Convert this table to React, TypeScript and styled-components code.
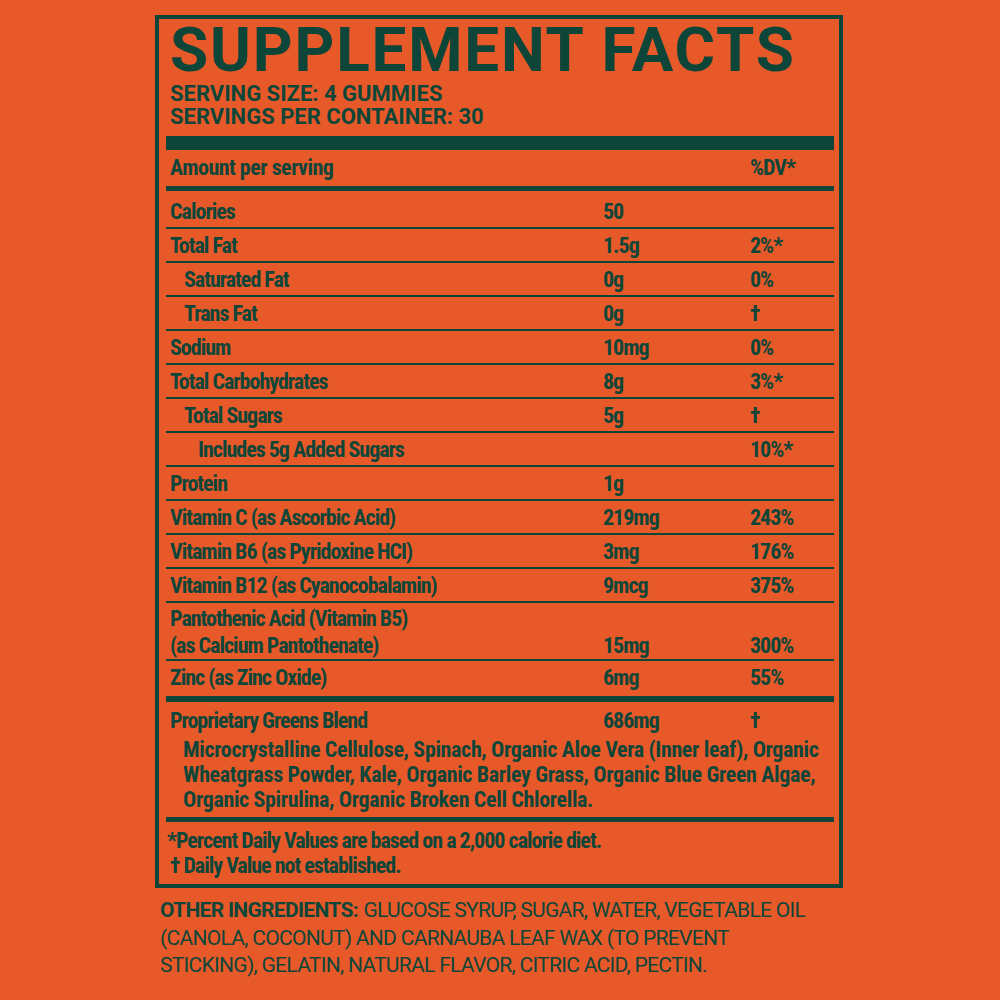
import React from "react";
import styled, { createGlobalStyle } from "styled-components";

const GREEN = "#0d4638";
const ORANGE = "#e8592a";

const GlobalStyle = createGlobalStyle`
  html, body {
    margin: 0;
    padding: 0;
    background: ${ORANGE};
  }
  body {
    color: ${GREEN};
    font-family: "Liberation Sans", Arial, sans-serif;
  }
`;

interface Nutrient {
  name: string;
  amount: string;
  dv: string;
  indent?: number;
}

const nutrients: Nutrient[] = [
  { name: "Total Fat", amount: "1.5g", dv: "2%*" },
  { name: "Saturated Fat", amount: "0g", dv: "0%", indent: 1 },
  { name: "Trans Fat", amount: "0g", dv: "†", indent: 1 },
  { name: "Sodium", amount: "10mg", dv: "0%" },
  { name: "Total Carbohydrates", amount: "8g", dv: "3%*" },
  { name: "Total Sugars", amount: "5g", dv: "†", indent: 1 },
  { name: "Includes 5g Added Sugars", amount: "", dv: "10%*", indent: 2 },
  { name: "Protein", amount: "1g", dv: "" },
  { name: "Vitamin C (as Ascorbic Acid)", amount: "219mg", dv: "243%" },
  { name: "Vitamin B6 (as Pyridoxine HCI)", amount: "3mg", dv: "176%" },
  { name: "Vitamin B12 (as Cyanocobalamin)", amount: "9mcg", dv: "375%" },
];

export default function App() {
  return (
    <Page>
      <GlobalStyle />
      <Label>
        <Title>SUPPLEMENT FACTS</Title>
        <Serving>
          SERVING SIZE: 4 GUMMIES
          <br />
          SERVINGS PER CONTAINER: 30
        </Serving>
        <HeavyBar />

        <Row $pad={2} $height={36} $rule="none">
          <Name $wide>Amount per serving</Name>
          <Cell />
          <Cell>%DV*</Cell>
        </Row>
        <Rule $size={5} />

        <Row $pad={5} $height={36}>
          <Name>Calories</Name>
          <Cell>50</Cell>
          <Cell />
        </Row>
        {nutrients.map((n, i) => (
          <Row key={i} $pad={1}>
            <Name $indent={n.indent}>{n.name}</Name>
            <Cell>{n.amount}</Cell>
            <Cell>{n.dv}</Cell>
          </Row>
        ))}
        <Row $tall>
          <Name>
            Pantothenic Acid (Vitamin B5)
            <br />
            (as Calcium Pantothenate)
          </Name>
          <Cell>15mg</Cell>
          <Cell>300%</Cell>
        </Row>
        <Row $pad={1} $height={35} $rule="none">
          <Name>Zinc (as Zinc Oxide)</Name>
          <Cell>6mg</Cell>
          <Cell>55%</Cell>
        </Row>
        <Rule $size={6} />

        <Blend>
          <BlendHead>
            <Name>Proprietary Greens Blend</Name>
            <Cell>686mg</Cell>
            <Cell>†</Cell>
          </BlendHead>
          <BlendList>
            Microcrystalline Cellulose, Spinach, Organic Aloe Vera (Inner leaf), Organic Wheatgrass
            Powder, Kale, Organic Barley Grass, Organic Blue Green Algae, Organic Spirulina, Organic
            Broken Cell Chlorella.
          </BlendList>
        </Blend>
        <Rule $size={5} />

        <Notes>
          <Note>*Percent Daily Values are based on a 2,000 calorie diet.</Note>
          <Note $dagger>† Daily Value not established.</Note>
        </Notes>
      </Label>

      <Other>
        <Strong>OTHER INGREDIENTS:</Strong> GLUCOSE SYRUP, SUGAR, WATER, VEGETABLE OIL (CANOLA,
        COCONUT) AND CARNAUBA LEAF WAX (TO PREVENT STICKING), GELATIN, NATURAL FLAVOR, CITRIC ACID,
        PECTIN.
      </Other>
    </Page>
  );
}

const condensed = `
  font-family: "Liberation Sans Narrow", "Roboto Condensed", "DejaVu Sans Condensed", "Liberation Sans", sans-serif;
  font-stretch: condensed;
  font-weight: 700;
  font-size: 22px;
  letter-spacing: -1px;
`;

const Page = styled.div`
  padding: 15px 0 0 155px;
  width: 700px;
`;

const Label = styled.div`
  box-sizing: content-box;
  width: 668px;
  border: 4px solid ${GREEN};
  padding: 0 5px 0 7px;
`;

const Title = styled.h1`
  margin: 0;
  padding-left: 4px;
  font-family: Roboto, "Liberation Sans", sans-serif;
  font-weight: 700;
  font-size: 62px;
  line-height: 62px;
  letter-spacing: 1.8px;
`;

const Serving = styled.div`
  margin-top: 1px;
  padding-left: 4px;
  font-family: Roboto, "Liberation Sans", sans-serif;
  font-weight: 700;
  font-size: 22px;
  line-height: 23px;
`;

const HeavyBar = styled.div`
  height: 14px;
  margin-top: 8px;
  background: ${GREEN};
`;

const Rule = styled.div<{ $size: number }>`
  height: ${(p) => p.$size}px;
  background: ${GREEN};
`;

const Row = styled.div<{ $pad?: number; $height?: number; $rule?: "thin" | "none"; $tall?: boolean }>`
  ${condensed}
  display: grid;
  grid-template-columns: 437px 147px 1fr;
  align-items: ${(p) => (p.$tall ? "end" : "start")};
  box-sizing: content-box;
  padding-top: ${(p) => (p.$tall ? 2 : p.$pad ?? 0)}px;
  height: ${(p) => (p.$tall ? 54 : (p.$height ?? 32) - (p.$pad ?? 0))}px;
  line-height: ${(p) => (p.$tall ? 27 : 32)}px;
  border-bottom: ${(p) => (p.$rule === "none" ? "0" : `2px solid ${GREEN}`)};
`;

const Name = styled.div<{ $indent?: number; $wide?: boolean }>`
  padding-left: ${(p) => 4 + (p.$indent ?? 0) * 14}px;
  white-space: nowrap;
  letter-spacing: ${(p) => (p.$wide ? "-0.5px" : "inherit")};
`;

const Cell = styled.div`
  white-space: nowrap;
`;

const Blend = styled.div`
  padding: 6px 0 5px;
`;

const BlendHead = styled.div`
  ${condensed}
  display: grid;
  grid-template-columns: 437px 147px 1fr;
  line-height: 26px;
`;

const BlendList = styled.div`
  ${condensed}
  margin-top: 3px;
  padding-left: 17px;
  padding-right: 2px;
  line-height: 25px;
  letter-spacing: -0.35px;
`;

const Notes = styled.div`
  ${condensed}
  padding: 6px 0 6px;
  line-height: 25px;
  letter-spacing: -1px;
`;

const Note = styled.div<{ $dagger?: boolean }>`
  padding-left: ${(p) => (p.$dagger ? 4 : 1)}px;
`;

const Other = styled.p`
  margin: 9px 0 0 5px;
  width: 668px;
  font-family: Roboto, "Liberation Sans", sans-serif;
  font-size: 21px;
  line-height: 27.5px;
  letter-spacing: -0.7px;
`;

const Strong = styled.strong`
  font-weight: 700;
  margin-right: 1px;
`;
